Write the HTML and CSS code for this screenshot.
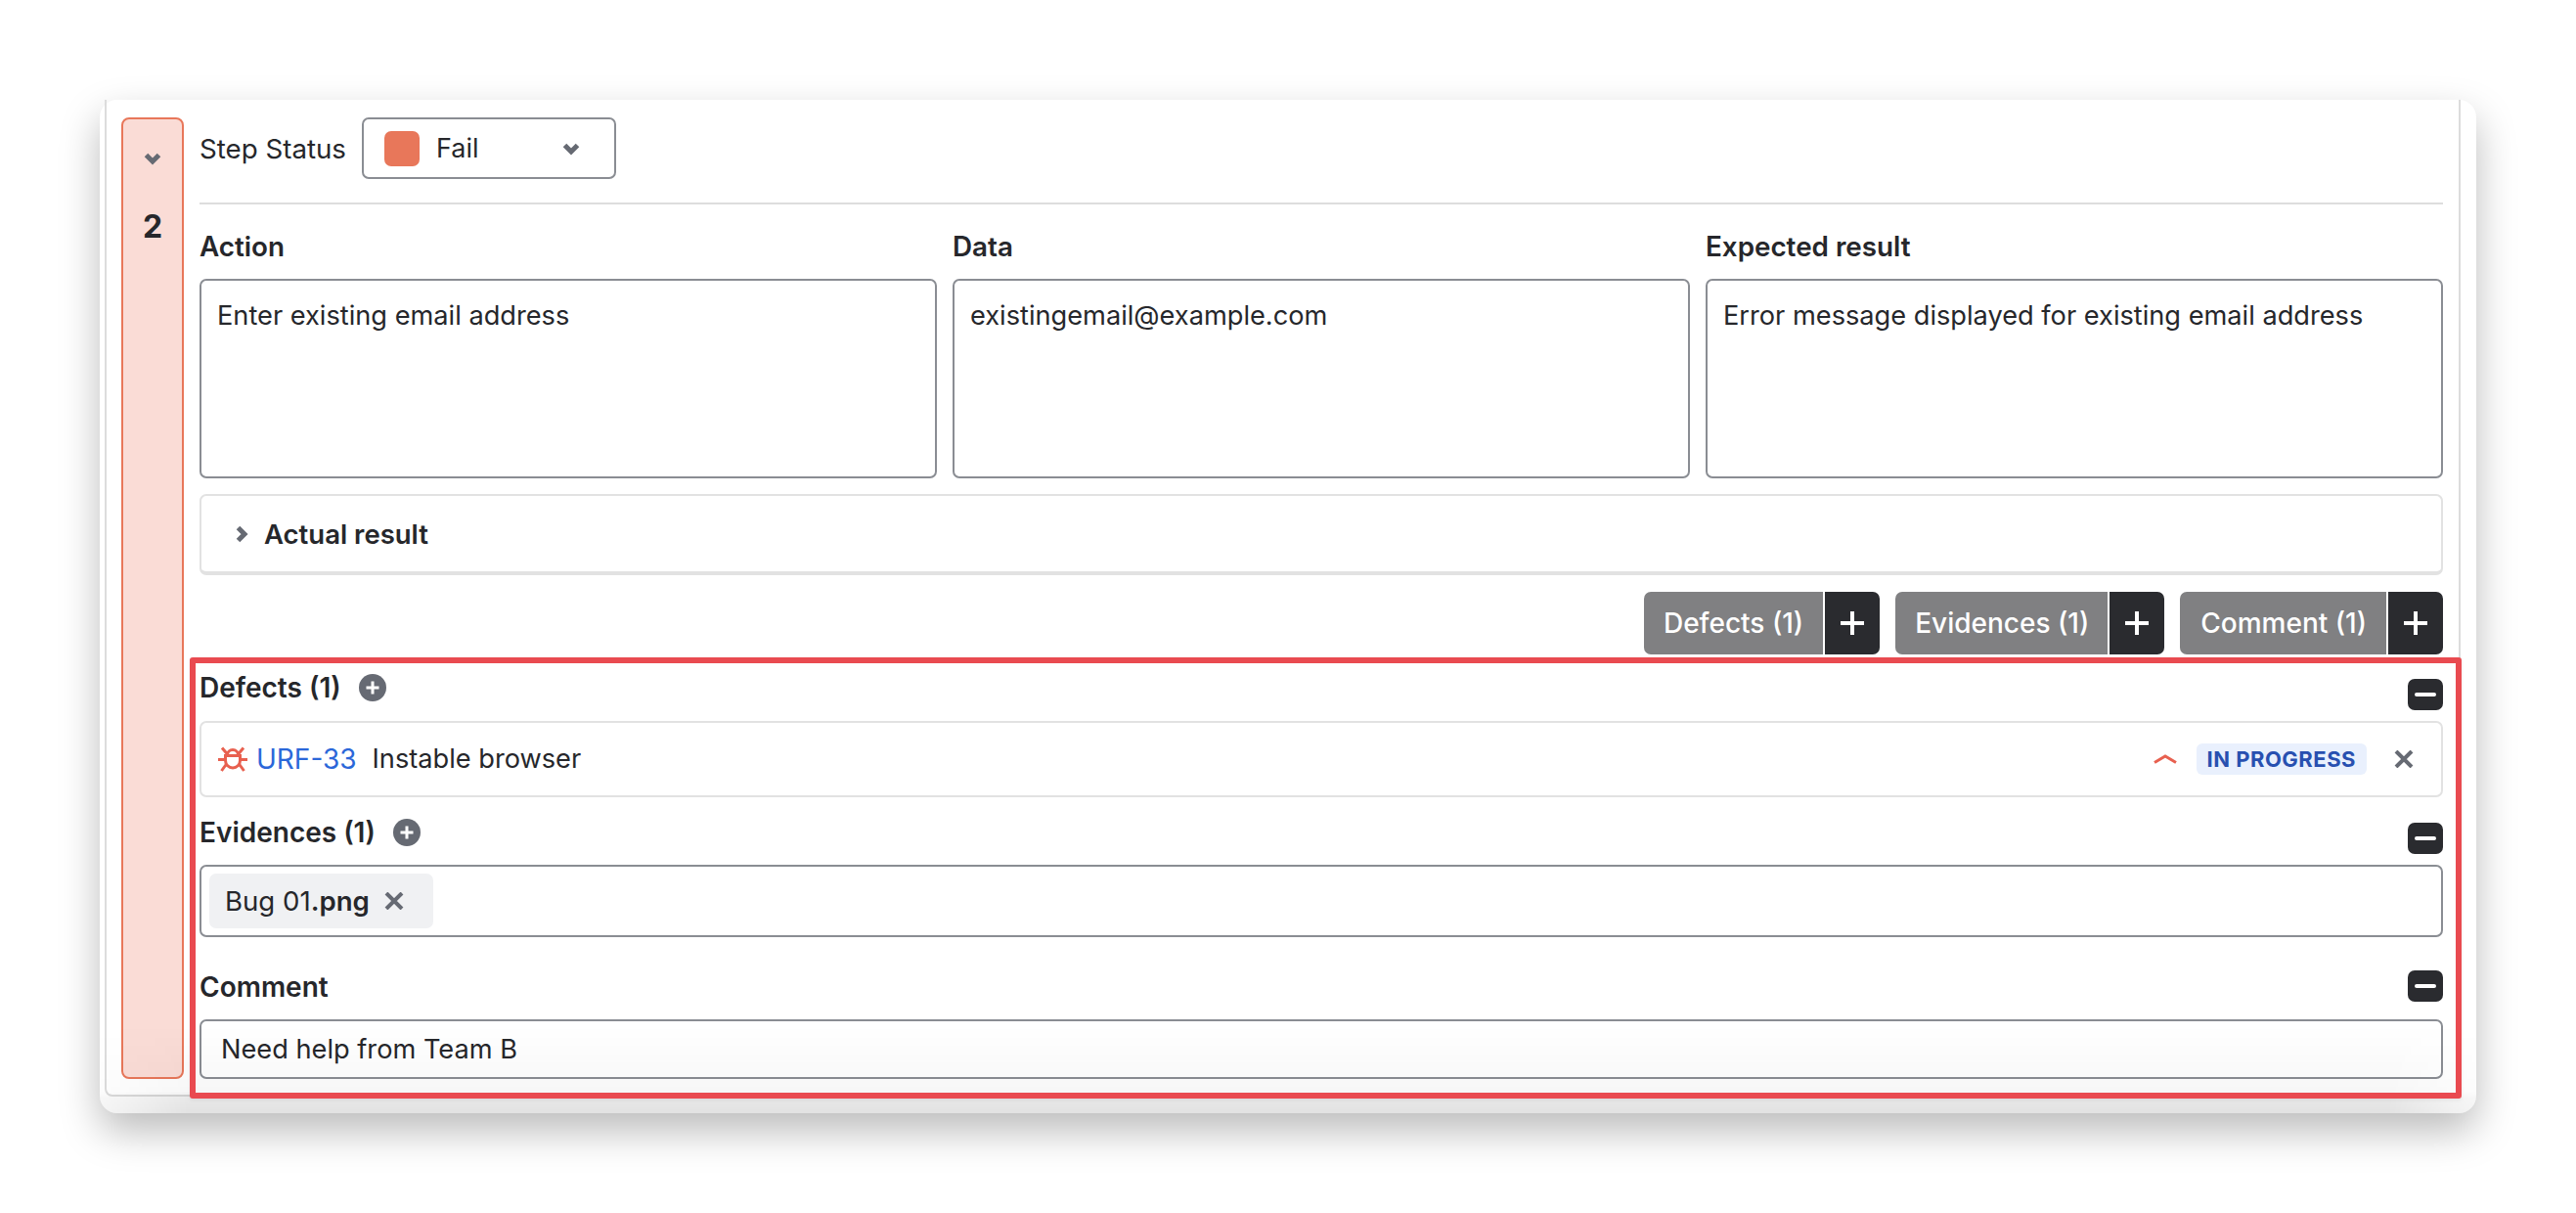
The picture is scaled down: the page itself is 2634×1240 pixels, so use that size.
FILE: index.html
```html
<!DOCTYPE html>
<html lang="en">
<head>
<meta charset="utf-8">
<title>Step 2</title>
<link rel="stylesheet" href="styles.css">
</head>
<body>
<div class="window">
  <div class="card">
    <aside class="step">
      <svg class="chev" viewBox="0 0 16 10"><path d="M1.500 1.500l6.500 6.500 6.500-6.500"/></svg>
      <div class="step-num">2</div>
    </aside>
    <main class="main">
      <div class="status-row">
        <span>Step Status</span>
        <div class="select">
          <span class="swatch"></span>
          <span class="select-text">Fail</span>
          <svg class="chev" viewBox="0 0 16 10"><path d="M1.500 1.500l6.500 6.500 6.500-6.500"/></svg>
        </div>
      </div>
      <div class="divider"></div>
      <div class="fields">
        <div class="field"><div class="label">Action</div><div class="area">Enter existing email address</div></div>
        <div class="field"><div class="label">Data</div><div class="area">existingemail@example.com</div></div>
        <div class="field"><div class="label">Expected result</div><div class="area">Error message displayed for existing email address</div></div>
      </div>
      <div class="accordion">
        <svg class="chev-right" viewBox="0 0 10 16"><path d="M1.500 1.500l6.500 6.500-6.500 6.500"/></svg>
        <span class="label label-accordion">Actual result</span>
      </div>
      <div class="actions">
        <div class="btn-group"><span class="btn-text">Defects (1)</span><span class="btn-plus"><svg viewBox="0 0 24 24"><path d="M12 0v24M0 12h24"/></svg></span></div>
        <div class="btn-group"><span class="btn-text btn-text-evidences">Evidences (1)</span><span class="btn-plus"><svg viewBox="0 0 24 24"><path d="M12 0v24M0 12h24"/></svg></span></div>
        <div class="btn-group"><span class="btn-text btn-text-comment">Comment (1)</span><span class="btn-plus"><svg viewBox="0 0 24 24"><path d="M12 0v24M0 12h24"/></svg></span></div>
      </div>

      <div class="head head-defects">
        <div class="head-title"><span class="label">Defects (1)</span><svg class="add" viewBox="0 0 28 28"><circle cx="14" cy="14" r="14"/><path d="M14 7.500v13M7.500 14h13"/></svg></div>
        <span class="minus"><i></i></span>
      </div>
      <div class="defect">
        <svg class="bug" viewBox="0 0 30 26"><path d="M7.500 9.500h15v5a7.500 7.500 0 0 1-15 0zM9.500 9a5.500 5.500 0 0 1 11 0M4 1.500l5.500 6.500M26 1.500l-5.500 6.500M0 13.500h7.500M22.500 13.500h7.500M8.500 18l-5 7M21.500 18l5 7"/></svg>
        <a class="key">URF-33</a>
        <span class="summary">Instable browser</span>
        <svg class="prio" viewBox="0 0 24 10"><path d="M1 8.500l11-6.500 11 6.500"/></svg>
        <span class="badge">IN PROGRESS</span>
        <svg class="x x-row" viewBox="0 0 20 18"><path d="M2 1l16 16M18 1L2 17"/></svg>
      </div>

      <div class="head head-evidences">
        <div class="head-title"><span class="label">Evidences (1)</span><svg class="add" viewBox="0 0 28 28"><circle cx="14" cy="14" r="14"/><path d="M14 7.500v13M7.500 14h13"/></svg></div>
        <span class="minus"><i></i></span>
      </div>
      <div class="evidence">
        <div class="chip"><span>Bug 01<b>.png</b></span><svg class="x" viewBox="0 0 20 18"><path d="M2 1l16 16M18 1L2 17"/></svg></div>
      </div>

      <div class="head head-comment">
        <div class="head-title"><span class="label">Comment</span></div>
        <span class="minus"><i></i></span>
      </div>
      <div class="comment">Need help from Team B</div>
    </main>
  </div>
  <div class="highlight"></div>
</div>
</body>
</html>
```
FILE: styles.css
```css
* { box-sizing: border-box; }
html, body { margin: 0; background: #fff; }
body {
  width: 2634px; height: 1240px; overflow: hidden;
  padding: 102px 0 0 102px;
  font-family: Inter, "Liberation Sans", sans-serif;
  font-size: 27.2px; line-height: 34px; color: #26272b;
}
svg { display: block; fill: none; }

.window {
  position: relative;
  width: 2430px; height: 1036px;
  padding: 0 16px 17px 5px;
  background: #fff;
  border-radius: 18px;
  box-shadow: 0 18px 40px rgba(0,0,0,.27);
}
/* soft fade that darkens the lower edge of the window */
.window::after {
  content: "";
  position: absolute; left: 0; right: 0; bottom: 0;
  height: 90px;
  border-radius: 0 0 18px 18px;
  background: linear-gradient(to bottom, rgba(0,0,0,0) 0, rgba(0,0,0,.03) 75%, rgba(0,0,0,.09) 83%, rgba(0,0,0,.115) 100%);
  -webkit-mask-image: linear-gradient(to right, rgba(0,0,0,.35) 0, #000 90px, #000 calc(100% - 90px), rgba(0,0,0,.35) 100%);
  mask-image: linear-gradient(to right, rgba(0,0,0,.35) 0, #000 90px, #000 calc(100% - 90px), rgba(0,0,0,.35) 100%);
  pointer-events: none;
}
.card {
  height: 100%;
  display: flex; gap: 16px;
  padding: 18px 16px 16px 15px;
  border: 2px solid #dcdcdc; border-top: 0;
  border-radius: 0 0 8px 8px;
}
.step {
  flex: 0 0 64px;
  display: flex; flex-direction: column; align-items: center;
  padding-top: 35px;
  background: #fadcd6;
  border: 2px solid #e8775a;
  border-radius: 8px;
}
.chev { width: 16px; height: 10px; overflow: visible; }
.chev path, .chev-right path { stroke: #666a73; stroke-width: 5; }
.step-num { margin-top: 45px; font-size: 32px; line-height: 40px; font-weight: 700; }

.main { flex: 1; min-width: 0; display: flex; flex-direction: column; }
.status-row { height: 63px; display: flex; align-items: center; gap: 16px; font-size: 27.7px; }
.select {
  width: 260px; height: 63px;
  display: flex; align-items: center;
  padding: 0 36px 0 21px;
  border: 2px solid #8a8d93; border-radius: 7px;
}
.swatch { width: 36px; height: 36px; background: #e8775a; border-radius: 7px; }
.select-text { flex: 1; margin-left: 17px; font-size: 27px; }
.divider { height: 2px; margin-top: 24px; background: #dddddd; }

.fields { display: grid; grid-template-columns: repeat(3, 754px); column-gap: 16px; margin-top: 26px; }
.label { font-size: 28px; font-weight: 600; }
.field .label { font-size: 27.8px; }
.label-accordion { font-size: 27.5px; }
.area {
  height: 204px; margin-top: 16px; padding: 19px 16px;
  border: 2px solid #8a8d93; border-radius: 7px;
}

.accordion {
  height: 83px; margin-top: 16px; padding-left: 36px;
  display: flex; align-items: center; gap: 18px;
  border: 2px solid #e2e2e2; border-bottom-width: 4px; border-radius: 7px;
}
.chev-right { width: 10px; height: 16px; overflow: visible; }

.actions { height: 64px; margin-top: 17px; display: flex; justify-content: flex-end; gap: 16px; }
.btn-group { display: flex; gap: 2px; color: #fff; font-size: 28px; font-weight: 500; }
.btn-text {
  display: flex; align-items: center; padding: 0 20px;
  background: #808082; border-radius: 7px 0 0 7px;
}
.btn-text-evidences { padding-right: 19px; }
.btn-text-comment { padding-left: 21px; }
.btn-plus {
  width: 56px; display: flex; align-items: center; justify-content: center;
  background: #2a2b2f; border-radius: 0 7px 7px 0;
}
.btn-plus svg { width: 24px; height: 24px; }
.btn-plus path { stroke: #fff; stroke-width: 4; }

.head { display: flex; justify-content: space-between; align-items: flex-end; }
.head-title { display: flex; align-items: center; gap: 18px; align-self: flex-start; }
.head-defects { height: 40px; margin-top: 17px; }
.head-evidences { height: 39px; margin-top: 19px; }
.head-comment { height: 32px; margin-top: 34px; align-items: flex-start; }
.add { width: 28px; height: 28px; }
.add circle { fill: #666a73; }
.add path { stroke: #fff; stroke-width: 3; }
.minus {
  width: 36px; height: 32px;
  display: flex; align-items: center; justify-content: center;
  background: #2a2b2f; border-radius: 7px;
}
.minus i { width: 22px; height: 4px; background: #fff; border-radius: 2px; }

.defect {
  height: 78px; margin-top: 11px; padding: 0 28px 0 17px;
  display: flex; align-items: center;
  border: 2px solid #e2e2e2; border-radius: 7px;
}
.bug { width: 30px; height: 26px; margin-right: 9px; }
.bug path { stroke: #e8604f; stroke-width: 3; }
.key { color: #2b67d9; font-size: 28px; margin-right: 16px; }
.summary { flex: 1; }
.prio { width: 24px; height: 10px; }
.prio path { stroke: #e8604f; stroke-width: 3; }
.badge {
  margin-left: 20px; height: 32px; padding: 0 11px;
  display: flex; align-items: center;
  background: #e9f0fd; border-radius: 6px;
  color: #2850b0; font-size: 22px; font-weight: 700; letter-spacing: .5px;
}
.x { width: 20px; height: 18px; }
.x path { stroke: #666a73; stroke-width: 4; }
.x-row { margin-left: 28px; }

.evidence {
  height: 74px; margin-top: 11px; padding: 7px 8px;
  border: 2px solid #8a8d93; border-radius: 7px;
}
.chip {
  width: 229px; height: 56px; padding: 0 16px;
  display: flex; align-items: center; gap: 15px;
  background: #f0f1f3; border-radius: 7px;
  font-size: 27.6px;
}
.chip b { font-weight: 600; }

.comment {
  height: 61px; margin-top: 18px; padding: 0 20px;
  display: flex; align-items: center;
  border: 2px solid #8a8d93; border-radius: 7px;
}

.highlight {
  position: absolute; z-index: 1; left: 92px; top: 570px;
  width: 2323px; height: 451px;
  border: 6px solid #e94a50; border-radius: 3px;
  box-shadow: 0 2px 4px rgba(0,0,0,.06);
  pointer-events: none;
}
```
